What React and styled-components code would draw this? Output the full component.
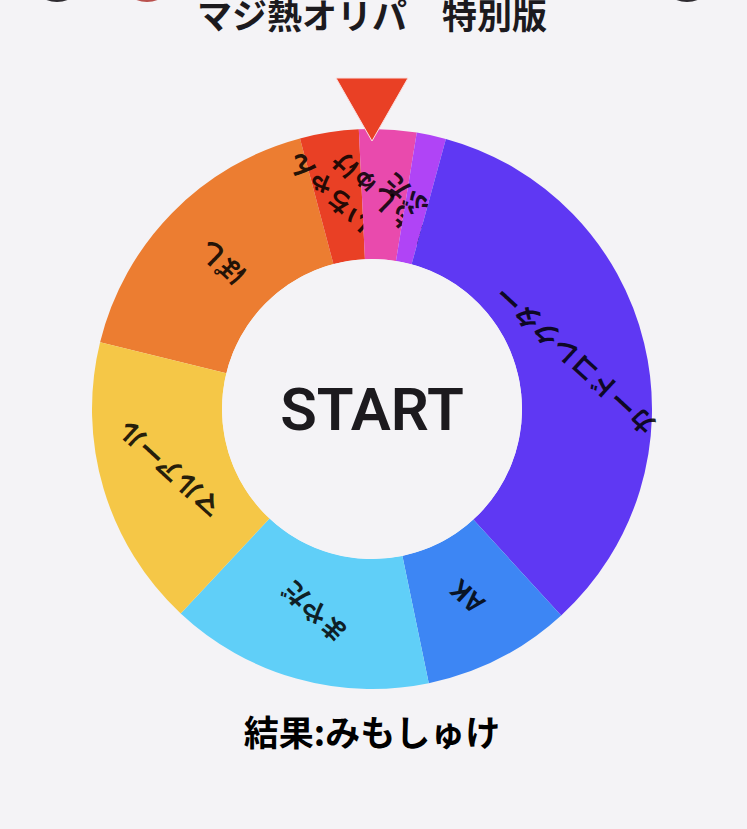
import React from "react";
import styled, { createGlobalStyle } from "styled-components";

const GlobalStyle = createGlobalStyle`
  *, *::before, *::after { box-sizing: border-box; }
  body {
    margin: 0;
    background: #f4f3f6;
    color: #1c1a1e;
    font-family: "Noto Sans CJK JP", sans-serif;
    overflow-x: hidden;
  }
`;

const Page = styled.main`
  display: flex;
  flex-direction: column;
  align-items: center;
  padding-right: 3px;
`;

const TopBar = styled.header`
  align-self: stretch;
  display: grid;
  grid-template-columns: 1fr auto 1fr;
  align-items: start;
  padding: 0 28px;
`;

const Group = styled.div`
  display: flex;
  gap: 32px;
  justify-content: ${(p) => (p.$end ? "flex-end" : "flex-start")};
`;

const RoundButton = styled.button`
  width: 58px;
  height: 58px;
  margin: -56px 0 0;
  padding: 0;
  border: 0;
  border-radius: 50%;
  background: ${(p) => p.$color};
`;

const Title = styled.h1`
  margin: 0;
  font-size: 35px;
  line-height: 28px;
  font-weight: 700;
  white-space: pre;
`;

const WheelArea = styled.section`
  position: relative;
  width: 100%;
  max-width: 566px;
  margin-top: 97px;
  display: grid;
  place-items: center;
`;

const WheelDrawing = styled.svg`
  display: block;
  width: 100%;
  overflow: visible;
`;

const SliceLabel = styled.text`
  font-family: "Noto Sans CJK JP", sans-serif;
  font-size: 26px;
  font-weight: 700;
  fill: #000;
  fill-opacity: 0.85;
  text-anchor: middle;
`;

const StartButton = styled.button`
  position: absolute;
  width: 53%;
  aspect-ratio: 1;
  padding: 0;
  border: 0;
  border-radius: 50%;
  background: #f4f3f6;
  color: #1c1a1e;
  font-family: Roboto, sans-serif;
  font-size: 60px;
  font-weight: 600;
`;

const Result = styled.p`
  margin: 12px 0 0;
  font-size: 35px;
  line-height: 52px;
  font-weight: 700;
  color: #000;
`;

const RADIUS = 280;
const HOLE = 150;
const LABEL_RADIUS = 210;
const LABEL_TURN = 222.5;

const slices = [
  { name: "ぽし", color: "#ec7d31", from: 193.8, to: 255.1 },
  { name: "けいちゃん", color: "#e94025", from: 255.1, to: 267.3 },
  { name: "みもしゅけ", color: "#e94aad", from: 267.3, to: 279.2 },
  { name: "こぶた", color: "#b044f6", from: 279.2, to: 285.3 },
  { name: "カードコレクター", color: "#5f38f3", from: 285.3, to: 407.5 },
  { name: "AK", color: "#3d86f4", from: 47.5, to: 78.3 },
  { name: "まやだ", color: "#60cff8", from: 78.3, to: 133.1 },
  { name: "マルアール", color: "#f5c747", from: 133.1, to: 193.8 },
];

const point = (radius, degrees) => {
  const a = (degrees * Math.PI) / 180;
  return [radius * Math.cos(a), radius * Math.sin(a)];
};

const ring = ({ from, to }) =>
  `M${point(RADIUS, from)} A${RADIUS} ${RADIUS} 0 0 1 ${point(RADIUS, to)} ` +
  `L${point(HOLE, to)} A${HOLE} ${HOLE} 0 0 0 ${point(HOLE, from)} Z`;

function Slice({ slice }) {
  const [x, y] = point(LABEL_RADIUS, (slice.from + slice.to) / 2);
  return (
    <g>
      <path d={ring(slice)} fill={slice.color} />
      <SliceLabel transform={`translate(${x} ${y}) rotate(${LABEL_TURN})`} dy="9">
        {slice.name}
      </SliceLabel>
    </g>
  );
}

export default function App() {
  return (
    <>
      <GlobalStyle />
      <Page>
        <TopBar>
          <Group>
            <RoundButton $color="#2e2b30" aria-label="メニュー" />
            <RoundButton $color="#b9504d" aria-label="削除" />
          </Group>
          <Title>マジ熱オリパ　特別版</Title>
          <Group $end>
            <RoundButton $color="#2e2b30" aria-label="設定" />
          </Group>
        </TopBar>
        <WheelArea>
          <WheelDrawing viewBox="-283 -284 566 568" role="img" aria-label="ルーレット">
            {slices.map((slice) => (
              <Slice key={slice.name} slice={slice} />
            ))}
            <path d="M-36 -331H36L0 -268Z" fill="#e94025" stroke="#f9dfe0" strokeWidth="1" />
          </WheelDrawing>
          <StartButton type="button">START</StartButton>
        </WheelArea>
        <Result>結果:みもしゅけ</Result>
      </Page>
    </>
  );
}
